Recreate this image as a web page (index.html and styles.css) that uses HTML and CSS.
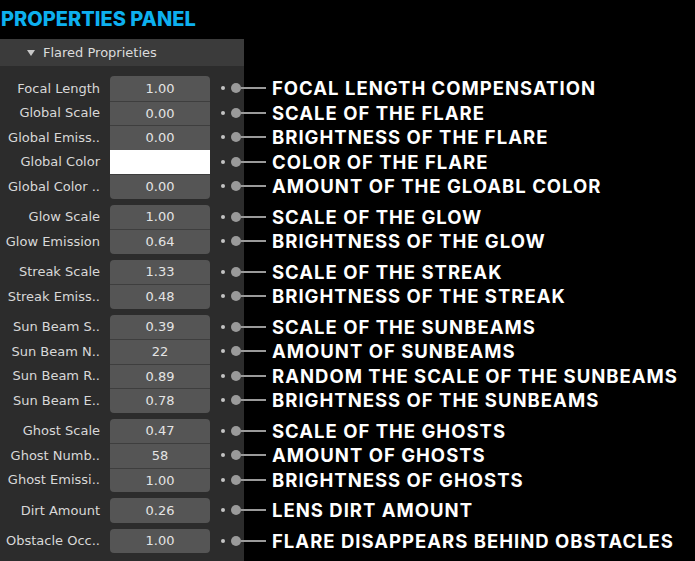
FILE: index.html
```html
<!DOCTYPE html>
<html lang="en">
<head>
  <meta charset="UTF-8" />
  <meta name="viewport" content="width=device-width, initial-scale=1.0"/>
  <title>Properties Panel</title>
  <link rel="stylesheet" href="styles.css">
</head>
<body>
  <h1 class="page-title">PROPERTIES PANEL</h1>

  <div class="panel">
    <div class="panel-header">
      <svg class="caret" width="8" height="6" viewBox="0 0 8 6"><polygon points="0,0 8,0 4,6" fill="#c8c8c8"/></svg>
      <span>Flared Proprieties</span>
    </div>

    <div class="panel-body">
      <div class="prop-group">
        <div class="prop-row">
          <span class="prop-label">Focal Length</span>
          <span class="prop-field">1.00</span>
          <span class="pin"><i class="pin-dot"></i><i class="pin-knob"></i><i class="pin-line"></i></span>
          <span class="prop-note">FOCAL LENGTH COMPENSATION</span>
        </div>
        <div class="prop-row">
          <span class="prop-label">Global Scale</span>
          <span class="prop-field">0.00</span>
          <span class="pin"><i class="pin-dot"></i><i class="pin-knob"></i><i class="pin-line"></i></span>
          <span class="prop-note">SCALE OF THE FLARE</span>
        </div>
        <div class="prop-row">
          <span class="prop-label">Global Emiss..</span>
          <span class="prop-field">0.00</span>
          <span class="pin"><i class="pin-dot"></i><i class="pin-knob"></i><i class="pin-line"></i></span>
          <span class="prop-note">BRIGHTNESS OF THE FLARE</span>
        </div>
        <div class="prop-row">
          <span class="prop-label">Global Color</span>
          <span class="prop-field swatch"></span>
          <span class="pin"><i class="pin-dot"></i><i class="pin-knob"></i><i class="pin-line"></i></span>
          <span class="prop-note">COLOR OF THE FLARE</span>
        </div>
        <div class="prop-row">
          <span class="prop-label">Global Color ..</span>
          <span class="prop-field">0.00</span>
          <span class="pin"><i class="pin-dot"></i><i class="pin-knob"></i><i class="pin-line"></i></span>
          <span class="prop-note">AMOUNT OF THE GLOABL COLOR</span>
        </div>
      </div>

      <div class="prop-group">
        <div class="prop-row">
          <span class="prop-label">Glow Scale</span>
          <span class="prop-field">1.00</span>
          <span class="pin"><i class="pin-dot"></i><i class="pin-knob"></i><i class="pin-line"></i></span>
          <span class="prop-note">SCALE OF THE GLOW</span>
        </div>
        <div class="prop-row">
          <span class="prop-label">Glow Emission</span>
          <span class="prop-field">0.64</span>
          <span class="pin"><i class="pin-dot"></i><i class="pin-knob"></i><i class="pin-line"></i></span>
          <span class="prop-note">BRIGHTNESS OF THE GLOW</span>
        </div>
      </div>

      <div class="prop-group">
        <div class="prop-row">
          <span class="prop-label">Streak Scale</span>
          <span class="prop-field">1.33</span>
          <span class="pin"><i class="pin-dot"></i><i class="pin-knob"></i><i class="pin-line"></i></span>
          <span class="prop-note">SCALE OF THE STREAK</span>
        </div>
        <div class="prop-row">
          <span class="prop-label">Streak Emiss..</span>
          <span class="prop-field">0.48</span>
          <span class="pin"><i class="pin-dot"></i><i class="pin-knob"></i><i class="pin-line"></i></span>
          <span class="prop-note">BRIGHTNESS OF THE STREAK</span>
        </div>
      </div>

      <div class="prop-group">
        <div class="prop-row">
          <span class="prop-label">Sun Beam S..</span>
          <span class="prop-field">0.39</span>
          <span class="pin"><i class="pin-dot"></i><i class="pin-knob"></i><i class="pin-line"></i></span>
          <span class="prop-note">SCALE OF THE SUNBEAMS</span>
        </div>
        <div class="prop-row">
          <span class="prop-label">Sun Beam N..</span>
          <span class="prop-field">22</span>
          <span class="pin"><i class="pin-dot"></i><i class="pin-knob"></i><i class="pin-line"></i></span>
          <span class="prop-note">AMOUNT OF SUNBEAMS</span>
        </div>
        <div class="prop-row">
          <span class="prop-label">Sun Beam R..</span>
          <span class="prop-field">0.89</span>
          <span class="pin"><i class="pin-dot"></i><i class="pin-knob"></i><i class="pin-line"></i></span>
          <span class="prop-note">RANDOM THE SCALE OF THE SUNBEAMS</span>
        </div>
        <div class="prop-row">
          <span class="prop-label">Sun Beam E..</span>
          <span class="prop-field">0.78</span>
          <span class="pin"><i class="pin-dot"></i><i class="pin-knob"></i><i class="pin-line"></i></span>
          <span class="prop-note">BRIGHTNESS OF THE SUNBEAMS</span>
        </div>
      </div>

      <div class="prop-group">
        <div class="prop-row">
          <span class="prop-label">Ghost Scale</span>
          <span class="prop-field">0.47</span>
          <span class="pin"><i class="pin-dot"></i><i class="pin-knob"></i><i class="pin-line"></i></span>
          <span class="prop-note">SCALE OF THE GHOSTS</span>
        </div>
        <div class="prop-row">
          <span class="prop-label">Ghost Numb..</span>
          <span class="prop-field">58</span>
          <span class="pin"><i class="pin-dot"></i><i class="pin-knob"></i><i class="pin-line"></i></span>
          <span class="prop-note">AMOUNT OF GHOSTS</span>
        </div>
        <div class="prop-row">
          <span class="prop-label">Ghost Emissi..</span>
          <span class="prop-field">1.00</span>
          <span class="pin"><i class="pin-dot"></i><i class="pin-knob"></i><i class="pin-line"></i></span>
          <span class="prop-note">BRIGHTNESS OF GHOSTS</span>
        </div>
      </div>

      <div class="prop-group">
        <div class="prop-row">
          <span class="prop-label">Dirt Amount</span>
          <span class="prop-field">0.26</span>
          <span class="pin"><i class="pin-dot"></i><i class="pin-knob"></i><i class="pin-line"></i></span>
          <span class="prop-note">LENS DIRT AMOUNT</span>
        </div>
      </div>

      <div class="prop-group">
        <div class="prop-row">
          <span class="prop-label">Obstacle Occ..</span>
          <span class="prop-field">1.00</span>
          <span class="pin"><i class="pin-dot"></i><i class="pin-knob"></i><i class="pin-line"></i></span>
          <span class="prop-note">FLARE DISAPPEARS BEHIND OBSTACLES</span>
        </div>
      </div>
    </div>
  </div>
</body>
</html>
```

FILE: styles.css
```css
* { margin: 0; padding: 0; box-sizing: border-box; }

:root {
  --panel-bg: #2c2c2c;
  --header-bg: #3b3b3b;
  --field-bg: #555555;
  --field-line: #3e3e3e;
  --label: #d8d8d8;
  --value: #e4e4e4;
  --pin: #9a9a9a;
  --accent: #0db0ef;
}

body {
  background: #000;
  width: 695px;
  height: 561px;
  overflow: hidden;
  font-family: "DejaVu Sans", sans-serif;
}

.page-title {
  font-family: Inter, "Liberation Sans", sans-serif;
  font-weight: 800;
  font-size: 20px;
  line-height: 39px;
  height: 39px;
  padding-left: 1px;
  color: var(--accent);
}

.panel-header {
  width: 244px;
  height: 27px;
  background: var(--header-bg);
  display: flex;
  align-items: center;
  gap: 8px;
  padding-left: 27px;
  font-size: 13px;
  color: #dcdcdc;
}

.panel-body {
  background: linear-gradient(to right, var(--panel-bg) 244px, #000 244px);
  height: 495px;
  padding-top: 10px;
  display: flex;
  flex-direction: column;
  gap: 6px;
}

.prop-row {
  display: flex;
  align-items: center;
  height: 24.5px;
}

.prop-label {
  width: 100px;
  text-align: right;
  font-size: 13px;
  color: var(--label);
  white-space: nowrap;
}

.prop-field {
  margin-left: 10px;
  width: 100px;
  height: 100%;
  background: var(--field-bg);
  border-top: 1px solid var(--field-line);
  color: var(--value);
  font-size: 13px;
  display: flex;
  align-items: center;
  justify-content: center;
}

.prop-row:first-child .prop-field {
  border-top: none;
  border-top-left-radius: 4px;
  border-top-right-radius: 4px;
}

.prop-row:last-child .prop-field {
  border-bottom-left-radius: 4px;
  border-bottom-right-radius: 4px;
}

.prop-field.swatch {
  background: #fff;
  border-top-color: #fff;
}

.pin {
  display: flex;
  align-items: center;
  width: 62px;
}

.pin i { display: block; }

.pin-dot {
  width: 4px;
  height: 4px;
  border-radius: 50%;
  background: #c4c4c4;
  margin-left: 11px;
}

.pin-knob {
  width: 10px;
  height: 10px;
  border-radius: 50%;
  background: var(--pin);
  margin-left: 5.5px;
}

.pin-line {
  width: 25px;
  height: 2px;
  background: var(--pin);
}

.prop-note {
  font-family: Inter, "Liberation Sans", sans-serif;
  font-weight: 700;
  font-size: 18.5px;
  letter-spacing: 1px;
  color: #fff;
  white-space: nowrap;
}
```
